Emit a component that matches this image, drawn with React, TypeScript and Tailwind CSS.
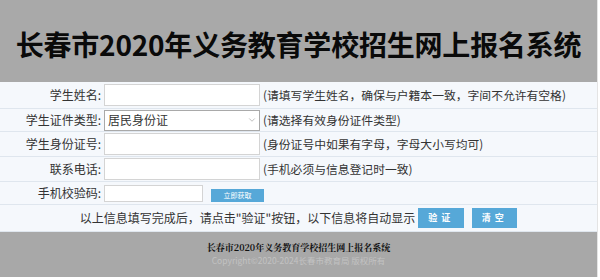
import { ChevronDown } from 'lucide-react';

const font = { fontFamily: '"Noto Sans CJK SC", "Microsoft YaHei", sans-serif' };

interface RowProps {
  label: string;
  h: string;
  children: React.ReactNode;
}

function Row({ label, h, children }: RowProps) {
  return (
    <div className={`flex items-center border-b border-[#dfe6ee] ${h}`}>
      <div className="w-[104px] shrink-0 pr-[3px] text-right text-[12px] text-[#333]">{label}</div>
      <div className="flex items-center">{children}</div>
    </div>
  );
}

function Hint({ children }: { children: React.ReactNode }) {
  return <span className="ml-[3px] text-[11.8px] text-[#333]">{children}</span>;
}

export default function App() {
  return (
    <div style={font} className="h-[280px] w-[600px] overflow-hidden bg-white">
      <div className="w-[598px] border-r border-[#e4e4e4]">
        <header className="flex h-[82px] items-center justify-center bg-[#a9a9a9] pt-[6px]">
          <h1 className="text-[28px] font-bold tracking-[-0.2px] text-[#0a0a0a]">
            长春市2020年义务教育学校招生网上报名系统
          </h1>
        </header>

        <div className="bg-[#f5f8fc]">
          <Row label="学生姓名:" h="h-[27px]">
            <input className="h-[22px] w-[156px] border border-[#d4d4d4] bg-white outline-none" />
            <Hint>(请填写学生姓名，确保与户籍本一致，字间不允许有空格)</Hint>
          </Row>
          <Row label="学生证件类型:" h="h-[23px]">
            <div className="flex h-[21px] w-[156px] items-center justify-between border border-[#a9a9a9] bg-white pl-[3px] pr-[2px] text-[12px] text-[#333]">
              <span>居民身份证</span>
              <ChevronDown size={10} strokeWidth={1.5} className="text-[#999]" />
            </div>
            <Hint>(请选择有效身份证件类型)</Hint>
          </Row>
          <Row label="学生身份证号:" h="h-[25px]">
            <input className="h-[22px] w-[156px] border border-[#d4d4d4] bg-white outline-none" />
            <Hint>(身份证号中如果有字母，字母大小写均可)</Hint>
          </Row>
          <Row label="联系电话:" h="h-[25px]">
            <input className="h-[22px] w-[156px] border border-[#d4d4d4] bg-white outline-none" />
            <Hint>(手机必须与信息登记时一致)</Hint>
          </Row>
          <Row label="手机校验码:" h="h-[23px]">
            <input className="h-[17px] w-[99px] border border-[#d4d4d4] bg-white outline-none" />
            <button className="ml-[8px] mt-[5px] h-[13px] w-[53px] bg-[#56a8d8] text-[7px] leading-[13px] text-white">
              立即获取
            </button>
          </Row>
          <div className="flex h-[27px] items-center justify-center border-b border-[#dfe6ee] text-[12px] text-[#333]">
            <span>以上信息填写完成后，请点击"验证"按钮，以下信息将自动显示</span>
            <button className="ml-[3px] h-[20px] w-[46px] bg-[#56a8d8] text-[9px] font-bold tracking-[4px] text-white">
              验证
            </button>
            <button className="ml-[8px] h-[20px] w-[45px] bg-[#56a8d8] text-[9px] font-bold tracking-[4px] text-white">
              清空
            </button>
          </div>
        </div>

        <footer className="flex h-[45px] flex-col items-center justify-center bg-[#a8a8a8] pb-[2px]">
          <div className="text-[9px] font-bold leading-[13px] text-[#111]" style={{ fontFamily: '"Noto Serif CJK SC", "Noto Sans CJK SC", serif' }}>
            长春市2020年义务教育学校招生网上报名系统
          </div>
          <div className="text-[8.5px] leading-[13px] text-[#c2c2c2]">Copyright©2020-2024长春市教育局 版权所有</div>
        </footer>
      </div>
    </div>
  );
}
